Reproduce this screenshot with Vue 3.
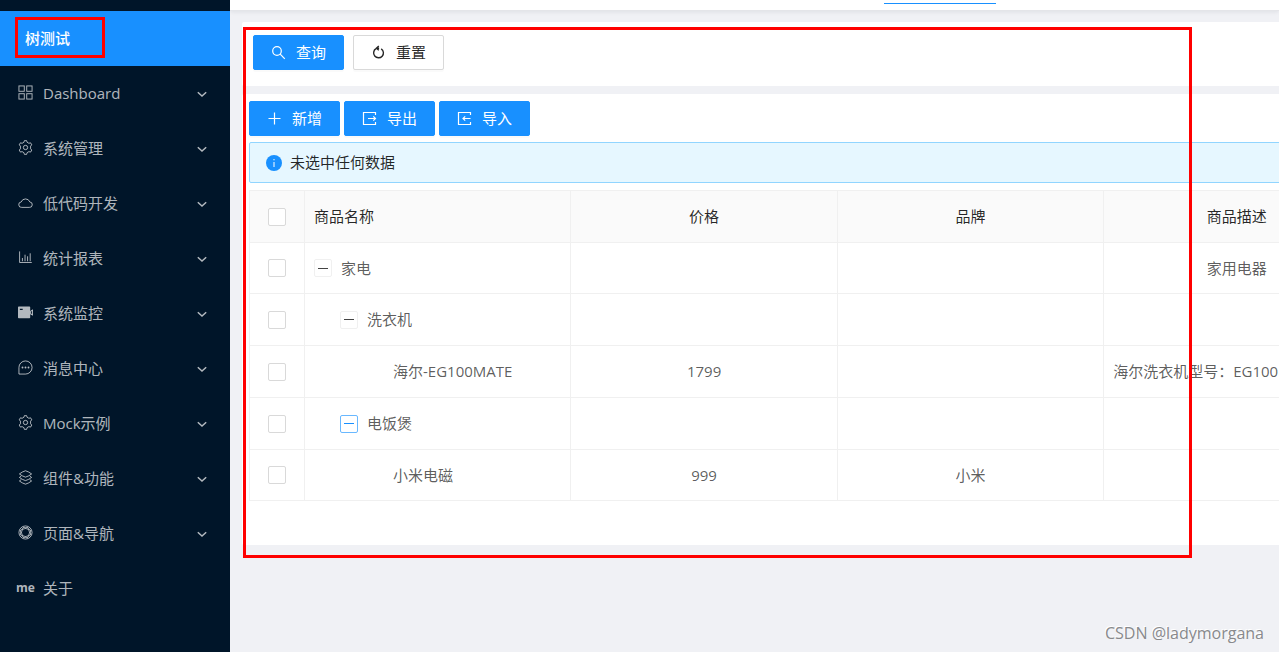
<script setup>
import { ref } from 'vue'

const menu = [
  { icon: 'grid', label: 'Dashboard' },
  { icon: 'gear', label: '系统管理' },
  { icon: 'cloud', label: '低代码开发' },
  { icon: 'chart', label: '统计报表' },
  { icon: 'video', label: '系统监控' },
  { icon: 'message', label: '消息中心' },
  { icon: 'gear', label: 'Mock示例' },
  { icon: 'layers', label: '组件&功能' },
  { icon: 'compass', label: '页面&导航' },
]

const rows = [
  { name: '家电', level: 0, parent: true, price: '', brand: '', desc: '家用电器' },
  { name: '洗衣机', level: 1, parent: true, price: '', brand: '', desc: '' },
  { name: '海尔-EG100MATE', level: 2, price: '1799', brand: '', desc: '海尔洗衣机型号：EG100', long: true },
  { name: '电饭煲', level: 1, parent: true, active: true, price: '', brand: '', desc: '' },
  { name: '小米电磁', level: 2, price: '999', brand: '小米', desc: '' },
]

const selected = ref([])
</script>

<template>
  <div class="page">
    <nav class="sidebar" aria-label="主菜单">
      <a class="item current" href="#tree">树测试</a>
      <button v-for="m in menu" :key="m.label" class="item" type="button" aria-expanded="false">
        <svg class="icon" viewBox="0 0 16 16" aria-hidden="true">
          <g v-if="m.icon === 'grid'">
            <rect x="1" y="1" width="5.7" height="5.7" /><rect x="9.3" y="1" width="5.7" height="5.7" />
            <rect x="1" y="9.3" width="5.7" height="5.7" /><rect x="9.3" y="9.3" width="5.7" height="5.7" />
          </g>
          <g v-else-if="m.icon === 'gear'">
            <path d="M6.3 2.4 6.8.7h2.4l.5 1.7 1.9 1.1 1.8-.5 1.3 2.2-1.3 1.3v2.9l1.3 1.3-1.3 2.2-1.8-.5-1.9 1.1-.5 1.8H6.8l-.5-1.8-1.9-1.1-1.8.5-1.3-2.2 1.3-1.3V6.5L1.3 5.2 2.6 3l1.8.5z" />
            <circle cx="8" cy="8" r="2.3" />
          </g>
          <path v-else-if="m.icon === 'cloud'" d="M4 13.2h8a2.9 2.9 0 0 0 .6-5.8 4.9 4.9 0 0 0-9.2 0A2.9 2.9 0 0 0 4 13.2z" />
          <path v-else-if="m.icon === 'chart'" d="M1.7 1.5v11.8h13M4.7 12V8.5M7.5 12V5M10.2 12V6.7M13 12V3.5" />
          <g v-else-if="m.icon === 'video'" class="solid">
            <path fill-rule="evenodd" d="M.8 1.7h11.4q.8 0 .8.8v10.8q0 .8-.8.8H.8q-.8 0-.8-.8V2.5q0-.8.8-.8zM2 4v1.2h3V4z" />
            <path fill-rule="evenodd" d="M13 6.3 16 4.5v7L13 9.8zM14 7v2l1 .7V6.3z" />
          </g>
          <g v-else-if="m.icon === 'message'">
            <path d="M1 15V8a7 7 0 1 1 7 7z" />
            <path class="dots" d="M4.8 8h.01M8 8h.01M11.2 8h.01" />
          </g>
          <g v-else-if="m.icon === 'layers'">
            <path d="M8 .8q3.500 1 6.500 3.400-3 2.400-6.500 3.400-3.500-1-6.500-3.400Q4.500 1.800 8 .8zM3.500 6.400l-2 1.500q3 2.400 6.500 3.400 3.500-1 6.500-3.400l-2-1.500M3.500 10.200l-2 1.500q3 2.400 6.500 3.400 3.500-1 6.500-3.400l-2-1.500" />
          </g>
          <g v-else>
            <circle cx="8" cy="8" r="7" />
            <path d="M5.800 2.700h4.400l3.100 3.100v4.400l-3.100 3.100H5.800l-3.100-3.100V5.800zM5.800 2.700l7.500 3.100M10.200 2.700l3.100 7.500M13.300 5.800l-3.100 7.500M13.300 10.200l-7.500 3.100M10.200 13.300l-7.500-3.100M5.800 13.300 2.700 5.800M2.700 10.200l3.100-7.500M2.700 5.800l7.500-3.100" stroke-width=".7" />
          </g>
        </svg>
        <span class="label">{{ m.label }}</span>
        <svg class="arrow" viewBox="0 0 10 10" aria-hidden="true"><path d="M.8 3.200 5 7l4.200-3.800" /></svg>
      </button>
      <a class="item" href="#about"><span class="me" aria-hidden="true">me</span><span class="label">关于</span></a>
    </nav>

    <main class="main">
      <header class="tabs"><span class="ink"></span></header>

      <div class="content">
        <section class="card search">
          <button class="btn primary" type="button">
            <svg viewBox="0 0 15 15" aria-hidden="true"><circle cx="6" cy="6" r="4.300" /><path d="m9.200 9.200 4.600 4.600" /></svg>查询
          </button>
          <button class="btn" type="button">
            <svg class="strong" viewBox="0 0 15 15" aria-hidden="true"><path d="M5 3.700a4.900 4.900 0 1 0 5.200.1M7.800 1 5.400 3.200l2.400 2M5.500 3.200h2.600" /></svg>重置
          </button>
        </section>

        <section class="card list">
          <div class="actions">
            <button class="btn primary" type="button">
              <svg viewBox="0 0 15 15" aria-hidden="true"><path d="M7.500 1.500v12M1.500 7.500h12" /></svg>新增
            </button>
            <button class="btn primary" type="button">
              <svg viewBox="0 0 15 15" aria-hidden="true"><path d="M13.500 4V1.500h-12v12h12V11M6 7.500h7.500M11.300 5.300l2.200 2.200-2.200 2.200" /></svg>导出
            </button>
            <button class="btn primary" type="button">
              <svg viewBox="0 0 15 15" aria-hidden="true"><path d="M13.500 4V1.500h-12v12h12V11M6 7.500h7.500M8.200 5.300 6 7.500l2.200 2.200" /></svg>导入
            </button>
          </div>

          <div class="notice" role="status">
            <svg viewBox="0 0 16 16" aria-hidden="true">
              <circle cx="8" cy="8" r="8" /><path d="M8 7v5M8 4v1.300" />
            </svg>
            未选中任何数据
          </div>

          <table class="grid">
            <thead>
              <tr>
                <th class="pick"><input type="checkbox" aria-label="全选" /></th>
                <th class="name">商品名称</th>
                <th>价格</th>
                <th>品牌</th>
                <th>商品描述</th>
                <th></th>
              </tr>
            </thead>
            <tbody>
              <tr v-for="r in rows" :key="r.name">
                <td class="pick"><input v-model="selected" type="checkbox" :value="r.name" :aria-label="r.name" /></td>
                <td class="name">
                  <div class="node" :class="'level-' + r.level">
                    <button v-if="r.parent" class="toggle" :class="{ active: r.active }" type="button" aria-expanded="true" :aria-label="r.name"></button>
                    <span v-else class="leaf"></span>
                    {{ r.name }}
                  </div>
                </td>
                <td>{{ r.price }}</td>
                <td>{{ r.brand }}</td>
                <td :class="{ long: r.long }">{{ r.desc }}</td>
                <td></td>
              </tr>
            </tbody>
          </table>
        </section>
      </div>
    </main>

    <div class="mark mark-menu"></div>
    <div class="mark mark-content"></div>
    <div class="watermark">CSDN @ladymorgana</div>
  </div>
</template>

<style>
body {
  margin: 0;
}
</style>

<style scoped>
.page {
  position: relative;
  display: flex;
  min-height: 100vh;
  overflow: hidden;
  background: #f0f1f5;
  color: rgba(0, 0, 0, 0.85);
  font: 15px/23px "Open Sans", "Noto Sans CJK SC", sans-serif;
}
.page * {
  box-sizing: border-box;
}
svg {
  flex: none;
  fill: none;
  stroke: currentColor;
}
button {
  font: inherit;
  cursor: pointer;
}

/* Sidebar */
.sidebar {
  flex: none;
  width: 230px;
  padding-top: 11px;
  background: #001529;
}
.item {
  display: flex;
  align-items: center;
  gap: 10px;
  width: 100%;
  height: 55px;
  padding: 0 23px 0 18px;
  border: 0;
  background: none;
  color: rgba(255, 255, 255, 0.7);
  text-align: left;
  text-decoration: none;
}
.item.current {
  padding-left: 25px;
  background: #1890ff;
  color: #fff;
  font-weight: 500;
}
.icon {
  width: 15px;
  height: 15px;
  margin-bottom: 2px;
}
.icon .solid {
  fill: currentColor;
  stroke: none;
}
.icon .dots {
  stroke-width: 2;
  stroke-linecap: round;
}
.label {
  flex: 1;
}
.arrow {
  width: 10px;
  height: 10px;
  stroke-width: 1.5;
}
.me {
  display: flex;
  justify-content: center;
  width: 15px;
  margin-bottom: 2px;
  font-size: 12px;
  font-weight: 700;
}

/* Main area */
.main {
  flex: 1;
  min-width: 0;
  overflow: hidden;
}
.tabs {
  display: flex;
  height: 11px;
  border-bottom: 1px solid #e4e5e9;
  background: #fff;
  box-shadow: 0 1px 4px rgba(0, 21, 41, 0.08);
}
.ink {
  width: 112px;
  height: 1px;
  margin: 3px 0 0 654px;
  background: #1890ff;
}
.content {
  display: grid;
  gap: 8px;
  min-width: max-content;
  padding: 11px 0 0 12px;
}
.card {
  background: #fff;
  border-radius: 2px;
}
.search {
  display: flex;
  gap: 9px;
  padding: 13px 11px 16px;
}
.list {
  padding: 7px 7px 44px;
}
.actions {
  display: flex;
  gap: 4px;
}
.btn {
  display: flex;
  align-items: center;
  gap: 10px;
  height: 35px;
  padding: 0 17px;
  border: 1px solid #d9d9d9;
  border-radius: 2px;
  background: #fff;
  color: rgba(0, 0, 0, 0.85);
  box-shadow: 0 2px 0 rgba(0, 0, 0, 0.02);
}
.btn.primary {
  border-color: #1890ff;
  background: #1890ff;
  color: #fff;
}
.btn svg {
  width: 15px;
  height: 15px;
  stroke-width: 1.2;
}
.btn .strong {
  stroke-width: 1.4;
}
.notice {
  display: flex;
  align-items: center;
  gap: 8px;
  height: 41px;
  margin: 6px 0 7px;
  padding: 0 16px;
  border: 1px solid #91d5ff;
  border-radius: 2px;
  background: #e6f7ff;
}
.notice svg {
  width: 16px;
  height: 16px;
  fill: #1890ff;
  stroke: none;
}
.notice path {
  stroke: #fff;
}

/* Tree table */
.grid {
  width: 1388px;
  table-layout: fixed;
  border-collapse: separate;
  border-spacing: 0;
  border-top: 1px solid #f0f0f0;
  border-left: 1px solid #f0f0f0;
  color: rgba(0, 0, 0, 0.65);
}
th,
td {
  height: 52px;
  padding: 0 9px;
  border-right: 1px solid #f0f0f0;
  border-bottom: 1px solid #f0f0f0;
  font-weight: 400;
  text-align: center;
  white-space: nowrap;
}
th {
  background: #fafafa;
  color: rgba(0, 0, 0, 0.85);
}
tbody tr:nth-child(4n + 1) td {
  height: 51px;
}
.pick {
  width: 55px;
}
th.name,
td.name,
.long {
  text-align: left;
}
.pick input {
  appearance: none;
  display: block;
  width: 18px;
  height: 18px;
  margin: 0 auto;
  border: 1px solid #d9d9d9;
  border-radius: 2px;
  background: #fff;
}
.pick input:checked {
  border-color: #1890ff;
  background: #1890ff;
}
.node {
  display: flex;
  align-items: center;
  gap: 9px;
}
.level-1 {
  padding-left: 26px;
}
.level-2 {
  padding-left: 52px;
}
.toggle,
.leaf {
  flex: none;
  width: 18px;
  height: 18px;
}
.toggle {
  display: flex;
  align-items: center;
  justify-content: center;
  padding: 0;
  border: 1px solid #f0f0f0;
  border-radius: 2px;
  background: #fff;
  color: #444;
}
.toggle::before {
  content: "";
  width: 10px;
  height: 1px;
  background: currentColor;
}
.toggle.active {
  border-color: #69b8ff;
  color: #1890ff;
}

/* Overlays */
.mark {
  position: absolute;
  border: 3px solid #f00;
  pointer-events: none;
}
.mark-menu {
  top: 17px;
  left: 15px;
  width: 90px;
  height: 41px;
}
.mark-content {
  top: 27px;
  right: 87px;
  left: 243px;
  height: 531px;
}
.watermark {
  position: absolute;
  right: 15px;
  bottom: 7px;
  color: #88898c;
  font-size: 16px;
  text-shadow: -1px -1px 0 #fff;
}
</style>
